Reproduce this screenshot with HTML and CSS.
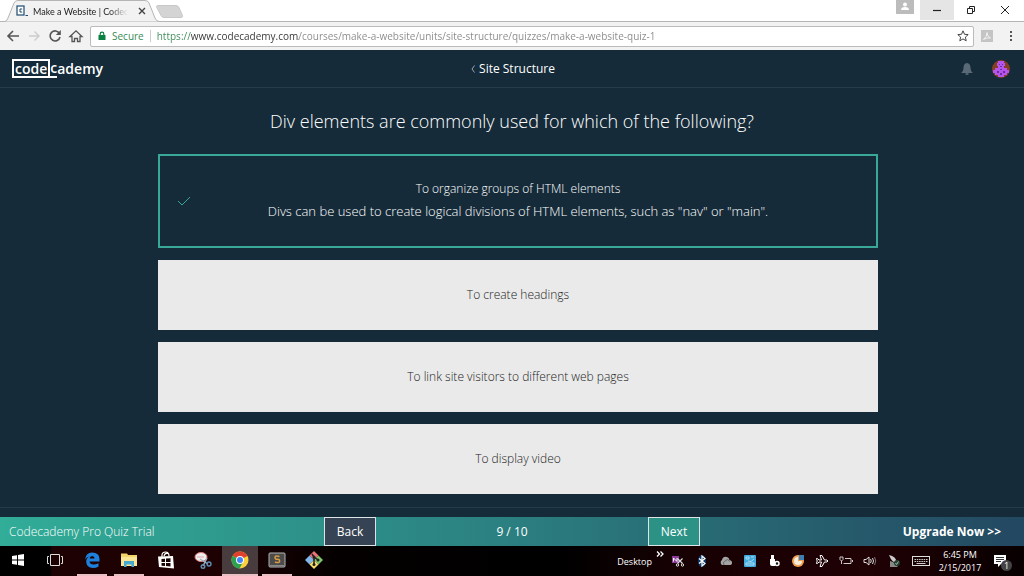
FILE: index.html
```html
<!DOCTYPE html>
<html lang="en">
<head>
    <meta charset="UTF-8">
    <title>Make a Website | Codecademy</title>
    <link rel="stylesheet" href="styles.css">
</head>
<body>
<div class="tabStrip">
    <div class="tab">
        <svg class="tabShape" viewBox="0 0 154 22" width="154" height="22"><path d="M0 21.5 Q2 21 3 18 L9 3 Q10 .5 13 .5 L140 .5 Q143 .5 144 3 L150 18 Q151 21 154 21.5" fill="#f2f2f2" stroke="#b5b5b5"/></svg>
        <svg class="favicon" viewBox="0 0 12 12" width="12" height="12"><rect x="1" y="1" width="7" height="9" fill="#fff" stroke="#1d4a70" stroke-width="1.2"/><path d="M6.200 4H4v3h2.200M9.500 10.500H12" fill="none" stroke="#1d4a70"/></svg>
        <span class="tabTitle">Make a Website | Codec</span>
        <button class="tabClose" aria-label="Close tab"><svg viewBox="0 0 8 8" width="8" height="8"><path d="M1 1l6 6M7 1L1 7" stroke="#444" stroke-width="1.4"/></svg></button>
    </div>
    <button class="newTab" aria-label="New tab"><svg viewBox="0 0 27 13" width="27" height="13"><path d="M2 .5H20q2 0 3 2l3.500 8q.5 2-1.500 2H8q-2 0-3-2L.8 2.500Q0 .5 2 .5z" fill="#d4d4d4" stroke="#c8c8c8"/></svg></button>
    <div class="windowButtons">
        <button class="profile" aria-label="Profile"><svg viewBox="0 0 18 14" width="18" height="14"><circle cx="9" cy="4.500" r="2" fill="#fff"/><path d="M5 10q0-3 4-3t4 3z" fill="#fff"/></svg></button>
        <button class="windowButton minimize" aria-label="Minimize"><svg viewBox="0 0 10 10" width="10" height="10"><path d="M1 5.500h8" stroke="#222" stroke-width="1.200"/></svg></button>
        <button class="windowButton" aria-label="Restore"><svg viewBox="0 0 10 10" width="10" height="10"><path d="M1.500 3.500h5v5h-5zM3.500 3.500v-2h5v5h-2" fill="none" stroke="#222"/></svg></button>
        <button class="windowButton" aria-label="Close"><svg viewBox="0 0 10 10" width="10" height="10"><path d="M1 1l8 8M9 1L1 9" stroke="#222"/></svg></button>
    </div>
</div>
<div class="toolbar">
    <button class="tool" aria-label="Back"><svg viewBox="0 0 16 16" width="16" height="16"><path d="M14 8H3.500M8 3L3 8l5 5" fill="none" stroke="#555" stroke-width="1.600"/></svg></button>
    <button class="tool" aria-label="Forward"><svg viewBox="0 0 16 16" width="16" height="16"><path d="M3 8h10M8.500 3.500L13 8l-4.500 4.500" fill="none" stroke="#ccc" stroke-width="1.400"/></svg></button>
    <button class="tool" aria-label="Reload"><svg viewBox="0 0 16 16" width="16" height="16"><path d="M12.500 5.500A5 5 0 1 0 13 9" fill="none" stroke="#555" stroke-width="1.600"/><path d="M13.800 2v5H8.800z" fill="#555"/></svg></button>
    <button class="tool" aria-label="Home"><svg viewBox="0 0 16 16" width="16" height="16"><path d="M2 8.500L8 2.800l6 5.700h-2V13.500H9.500v-3h-3v3H4v-5z" fill="none" stroke="#555" stroke-width="1.300"/></svg></button>
    <div class="addressBar">
        <svg viewBox="0 0 8 10" width="8" height="10"><path d="M2.200 5V3a1.800 1.800 0 0 1 3.600 0v2" fill="none" stroke="#0b8043" stroke-width="1.200"/><rect x=".5" y="4" width="7" height="5" fill="#0b8043"/></svg>
        <label class="secure" for="address">Secure</label>
        <input class="address" id="address" type="text" value="https://www.codecademy.com/courses/make-a-website/units/site-structure/quizzes/make-a-website-quiz-1">
        <button class="tool" aria-label="Bookmark"><svg viewBox="0 0 16 16" width="16" height="16"><path d="M8 2.800l1.500 3.500 3.700.3-2.800 2.500.8 3.700L8 10.900l-3.200 1.900.8-3.700L2.800 6.600l3.700-.3z" fill="none" stroke="#444"/></svg></button>
    </div>
    <button class="tool" aria-label="PDF extension"><svg viewBox="0 0 16 16" width="16" height="16"><rect x="2" y="2" width="12" height="12" fill="#c4c4c4"/><path d="M4.500 11.500Q8 8.500 8 4.500q0 4 3.500 5.500-3.500-.8-7 1.500z" fill="none" stroke="#f2f2f2"/></svg></button>
    <button class="tool" aria-label="Menu"><svg viewBox="0 0 16 16" width="16" height="16"><path d="M7 3h2v2H7zM7 7h2v2H7zM7 11h2v2H7z" fill="#555"/></svg></button>
</div>

<header class="header">
    <a class="logo" href="#"><span class="logoBox">code</span><span class="logoUnder">c</span>ademy</a>
    <a class="unit" href="#"><svg viewBox="0 0 4 8" width="4" height="8"><path d="M3.500.5L1 4l2.500 3.500" fill="none" stroke="#9aa5ad"/></svg>Site Structure</a>
    <div class="account">
        <svg viewBox="0 0 12 14" width="12" height="14"><path d="M6 1q3.500.5 3.500 5 0 3 2 4.500v.5H.5v-.5Q2.500 9 2.500 6q0-4.500 3.500-5z" fill="#596a76"/><path d="M4.500 11.500h3v1h-3z" fill="#8795a0"/></svg>
        <svg viewBox="0 0 18 18" width="18" height="18"><circle cx="9" cy="9" r="9" fill="#873f24"/><path d="M6 1h6v2h1v3h-1v2h3v2h2v3h-2v2h-3v2H6v-2H3v-2H1v-3h2V8h3V6H5V3h1z" fill="#b455ee"/><path d="M7 4h1v1H7zM10 4h1v1h-1zM8 6h2v1H8zM5 11h2v2H5zM11 11h2v2h-2zM8 9h2v1H8zM8 13h2v2H8z" fill="#6f2b9f"/></svg>
    </div>
</header>
<main class="quiz">
    <h1 class="question">Div elements are commonly used for which of the following?</h1>
    <div class="answers">
        <button class="answer correct">
            <svg class="check" viewBox="0 0 14 10" width="14" height="10"><path d="M1 5l4 4L13 1" fill="none" stroke="#35a793"/></svg>
            <span>To organize groups of HTML elements</span>
            <span class="explain">Divs can be used to create logical divisions of HTML elements, such as "nav" or "main".</span>
        </button>
        <button class="answer">To create headings</button>
        <button class="answer">To link site visitors to different web pages</button>
        <button class="answer">To display video</button>
    </div>
</main>
<footer class="trial">
    <span>Codecademy Pro Quiz Trial</span>
    <div class="pager">
        <button class="pagerButton back">Back</button>
        <span>9 / 10</span>
        <button class="pagerButton next">Next</button>
    </div>
    <a class="upgrade" href="#">Upgrade Now &gt;&gt;</a>
</footer>

<div class="taskbar">
    <button class="app" aria-label="Start"><svg viewBox="0 0 14 14" width="14" height="14"><path d="M1 3l5-.8v4.300H1zM7 2l6-1v5.500H7zM1 7.500h5v4.300L1 11zM7 7.500h6V13l-6-1z" fill="#fff"/></svg></button>
    <button class="app" aria-label="Task view"><svg viewBox="0 0 16 12" width="16" height="12"><path d="M3.500.5h9v11h-9zM2 2.500H.5v7H2M14 2.500h1.500v7H14" fill="none" stroke="#ddd"/></svg></button>
    <button class="app open" aria-label="Edge"><svg viewBox="0 0 16 16" width="16" height="16"><path d="M1 7.500Q2 .5 8 .5q7.500 0 7.500 6.500V9.500H5.500q.3 3 4.200 3 2.300 0 4.800-1.200v3.200Q12 16 9 16q-6.800 0-6.800-6.500 0-3.500 3.500-5.200Q2.500 5 1 7.500zM5.600 6.500h5Q10.500 4 8.200 4 6 4 5.600 6.500z" fill="#1c80dc" fill-rule="evenodd"/></svg></button>
    <button class="app open" aria-label="File Explorer"><svg viewBox="0 0 18 16" width="18" height="16"><path d="M1 1.500h6l1 1.500h9v11H1z" fill="#f4d36a"/><path d="M1 5h16v9H1z" fill="#fbe596"/><path d="M4 15V9h10v6h-2.500v-2.500h-5V15z" fill="#47a9cf"/></svg></button>
    <button class="app" aria-label="Store"><svg viewBox="0 0 18 18" width="18" height="18"><path d="M5 6V3.500Q5.500 1 8.500 1 12 1 12 5M7 5q1-3.500 4-2.500" fill="none" stroke="#fff" stroke-width="1.200"/><path d="M1 5.500L16 5l1 12.500L2 16z" fill="#fff"/><path d="M4.500 8l3.500-.3V11H4.500zM9 7.600l4.500-.4V11H9zM4.500 12H8v3l-3.500-.3zM9 12h4.500v3.500L9 15z" fill="#180204"/></svg></button>
    <button class="app" aria-label="Snipping Tool"><svg viewBox="0 0 18 18" width="18" height="18"><ellipse cx="7" cy="6" rx="6" ry="4.500" fill="#eee" stroke="#d8777b"/><path d="M3 6h7" stroke="#e3a3a6"/><path d="M6 8l8 5M13 7l-4 8" stroke="#9fb2c2" stroke-width="1.400"/><circle cx="15" cy="13" r="2" fill="none" stroke="#5f8cb0" stroke-width="1.400"/><circle cx="9" cy="15.500" r="1.800" fill="none" stroke="#5f8cb0" stroke-width="1.400"/></svg></button>
    <button class="app active" aria-label="Chrome"><svg viewBox="0 0 18 18" width="18" height="18"><circle cx="9" cy="9" r="8.500" fill="#fbd03b"/><path d="M9 9L1.600 4.800A8.500 8.500 0 0 1 16.400 5z" fill="#e0412f"/><path d="M9 9L1.600 4.800A8.500 8.500 0 0 0 8.500 17.500L12 11z" fill="#2fa04f"/><circle cx="9" cy="9" r="4" fill="#fff"/><circle cx="9" cy="9" r="3" fill="#4285f4"/></svg></button>
    <button class="app open" aria-label="Sublime Text"><svg viewBox="0 0 18 16" width="18" height="16"><rect x="1" y="1" width="16" height="14" rx="1" fill="#4b4b4b" stroke="#b5b5b5"/><path d="M11.500 4.500Q7 3 7 5.200t2.500 2 2 2.800q-1.500 1.200-4.500 0" fill="none" stroke="#d99a45" stroke-width="1.500"/><path d="M2 13.500h14" stroke="#888"/></svg></button>
    <button class="app" aria-label="Git"><svg viewBox="0 0 18 18" width="18" height="18"><path d="M9 0l4.500 4.500L9 9 4.500 4.500z" fill="#ee7278"/><path d="M4.500 4.500L9 9l-4.500 4.500L0 9z" fill="#82b5ea"/><path d="M13.500 4.500L18 9l-4.500 4.500L9 9z" fill="#83c76d"/><path d="M9 9l4.500 4.500L9 18l-4.500-4.500z" fill="#f7df6b"/><path d="M7 3l2 3v8M9 6l4 3" fill="none" stroke="#222" stroke-width="1.500"/><circle cx="9" cy="13.500" r="1.500" fill="#222"/><circle cx="13" cy="9" r="1.500" fill="#222"/><circle cx="9" cy="6" r="1.500" fill="#222"/></svg></button>
    <div class="tray">
        <span class="desktop">Desktop</span>
        <button class="trayIcon more" aria-label="More"><svg viewBox="0 0 8 6" width="8" height="6"><path d="M1 .5L3.500 3 1 5.500M4.500.5L7 3 4.500 5.500" fill="none" stroke="#fff" stroke-width="1.300"/></svg></button>
        <button class="trayIcon" aria-label="OneNote"><svg viewBox="0 0 16 16" width="16" height="16"><rect x="2" y="3" width="7" height="7" fill="#8d3b9c"/><path d="M3.500 8.500V5l3.500 3.500V5" fill="none" stroke="#fff"/><path d="M7.500 5.500l5 5M12.500 5.500l-5 5" stroke="#ddd" stroke-width="1.200"/><circle cx="7.500" cy="12" r="1.200" fill="none" stroke="#ddd"/><circle cx="12.500" cy="12" r="1.200" fill="none" stroke="#ddd"/></svg></button>
        <button class="trayIcon" aria-label="Bluetooth"><svg viewBox="0 0 16 16" width="16" height="16"><ellipse cx="8" cy="8" rx="4" ry="6" fill="#0c3a68"/><path d="M5 5.500l6 5-3 2.500V3l3 2.500-6 5" fill="none" stroke="#fff" stroke-width="1.200"/></svg></button>
        <button class="trayIcon" aria-label="OneDrive"><svg viewBox="0 0 16 16" width="16" height="16"><path d="M4 12a3 3 0 0 1 0-5q1-4 5-3 2 .5 2.500 3 3 .5 2.500 3.500-.5 1.500-2 1.500z" fill="#a3a3a3"/><path d="M6 12Q4 9 7.500 8q2-3 4 .5" fill="none" stroke="#666"/></svg></button>
        <button class="trayIcon" aria-label="Intel graphics"><svg viewBox="0 0 16 16" width="16" height="16"><rect x="2" y="2" width="12" height="12" rx="1" fill="#43aadd"/><path d="M4 10h8v2H4zM4 4h3v2H4zM9 4h3M6 8q3 2 6-2" fill="none" stroke="#a9dcf2"/></svg></button>
        <button class="trayIcon" aria-label="Safely remove hardware"><svg viewBox="0 0 16 16" width="16" height="16"><path d="M5 2h3v4H5zM4 6h5v7H6q-2 0-2-2z" fill="#fff"/><circle cx="11" cy="10.500" r="2" fill="#111" stroke="#fff" stroke-width="1.500"/></svg></button>
        <button class="trayIcon" aria-label="Updater"><svg viewBox="0 0 16 16" width="16" height="16"><circle cx="8" cy="8" r="6" fill="#f0a250"/><path d="M8 8V4a4 4 0 1 0 4 4z" fill="#f8eddc"/><path d="M9 2h5v5H9z" fill="#3d7fb5"/></svg></button>
        <button class="trayIcon" aria-label="Airplane mode"><svg viewBox="0 0 16 16" width="16" height="16"><path d="M2.500 5.500h1L5 7h2.500L6 2.500h2L10.500 7H13q2 1 0 2h-2.500L8 13.500H6L7.500 9H5l-1.500 1.500h-1l.7-2.500z" fill="none" stroke="#fff"/></svg></button>
        <button class="trayIcon" aria-label="Battery"><svg viewBox="0 0 16 16" width="16" height="16"><path d="M7 5.500h6v5H5.500M14.500 7v2" fill="none" stroke="#ccc"/><path d="M2 4h3v2.500L3.500 8 2 6.500zM3.500 8v3" fill="none" stroke="#ccc"/></svg></button>
        <button class="trayIcon" aria-label="Volume"><svg viewBox="0 0 16 16" width="16" height="16"><path d="M2 6.500h2L7 4v8L4 9.500H2zM8.500 6q1.500 2 0 4M10.500 5q2 3 0 6" fill="none" stroke="#ddd"/><path d="M12.500 4q2.500 4 0 8" fill="none" stroke="#777"/></svg></button>
        <button class="trayIcon" aria-label="Sync"><svg viewBox="0 0 16 16" width="16" height="16"><path d="M3 2q7 1 8 8-5 0-8-8z" fill="#ccc"/><path d="M4 8v6h8L7 9" fill="#888"/><circle cx="11" cy="10" r="3" fill="#273d32"/><path d="M9.500 10l1 1.500 2-3" fill="none" stroke="#91c4a7"/></svg></button>
        <button class="trayIcon keyboard" aria-label="Touch keyboard"><svg viewBox="0 0 18 12" width="18" height="12"><rect x=".5" y="1.500" width="17" height="9" fill="none" stroke="#ddd"/><path d="M2.500 4.500h13M2.500 6.500h13" stroke="#ccc" stroke-dasharray="1.500 .8"/><path d="M4.500 8.500h9" stroke="#ccc"/></svg></button>
        <div class="clock">
            <span>6:45 PM</span>
            <span>2/15/2017</span>
        </div>
        <button class="notifications" aria-label="Notifications"><svg viewBox="0 0 14 14" width="14" height="14"><path d="M1 1h12v9H8l-3 3v-3H1z" fill="#fff"/><path d="M3 3.500h8M3 5.500h8M3 7.500h5" stroke="#333"/></svg><span class="badge">1</span></button>
    </div>
</div>
</body>
</html>
```
FILE: styles.css
```css
*{
    box-sizing: border-box;
    padding: 0;
    margin: 0;
}
body{
    display: flex;
    flex-direction: column;
    min-height: 100vh;
    background-color: #152b39;
    font-family: "Open Sans", "Noto Sans", sans-serif;
}
a{
    color: inherit;
    text-decoration: none;
}
button{
    border: none;
    background: none;
    color: inherit;
    font: inherit;
}
svg{
    display: block;
    flex: none;
}

/* browser */
.tabStrip{
    display: flex;
    height: 22px;
    padding-left: 5px;
    background-color: #fff;
    border-bottom: 1px solid #b5b5b5;
}
.tab{
    position: relative;
    display: flex;
    align-items: center;
    gap: 5px;
    width: 151px;
    height: 22px;
    padding: 0 10px 0 11px;
}
.tabShape{
    position: absolute;
    top: 0;
    left: 0;
}
.favicon, .tabTitle, .tabClose{
    position: relative;
}
.tabTitle{
    white-space: nowrap;
    font: 9px Lato, sans-serif;
    color: #222;
    -webkit-mask-image: linear-gradient(to right, #000 80%, transparent);
    mask-image: linear-gradient(to right, #000 80%, transparent);
}
.tabClose{
    margin-left: auto;
}
.newTab{
    align-self: flex-start;
    padding-top: 5px;
}
.windowButtons{
    display: flex;
    align-items: flex-start;
    margin-left: auto;
    padding-right: 2px;
}
.profile{
    margin-right: 6px;
    background-color: #bcbcbc;
}
.windowButton{
    display: flex;
    align-items: center;
    justify-content: center;
    width: 34px;
    height: 20px;
}
.minimize{
    background-color: #e5e5e5;
}
.toolbar{
    display: flex;
    align-items: center;
    gap: 5px;
    height: 28px;
    padding: 0 5px;
    background-color: #f2f2f2;
}
.toolbar > .tool:last-child{
    margin-left: 3px;
}
.addressBar{
    display: flex;
    flex: 1;
    align-items: center;
    height: 21px;
    margin-left: 1px;
    padding: 0 2px 0 7px;
    border: 1px solid #bbb;
    border-radius: 2px;
    background-color: #fff;
    font-size: 10px;
}
.secure{
    margin-left: 6px;
    padding-right: 6px;
    border-right: 1px solid #ccc;
    line-height: 12px;
    color: #3a8a57;
}
.address{
    flex: 1;
    min-width: 0;
    margin-left: 6px;
    border: none;
    font: inherit;
    color: transparent;
    background: linear-gradient(to right, #3a8a57 34px, #333 34px, #333 142px, #888 142px);
    -webkit-background-clip: text;
    background-clip: text;
}

/* page */
.header{
    display: grid;
    grid-template-columns: 1fr auto 1fr;
    align-items: center;
    height: 38px;
    padding: 0 14px 0 12px;
    border-bottom: 1px solid #263c49;
    color: #fff;
}
.logo{
    display: flex;
    align-items: center;
    font-size: 14px;
    font-weight: 600;
    line-height: 16px;
}
.logoBox{
    padding: 0 1px;
    border: 2px solid #fff;
    line-height: 15px;
}
.logoUnder{
    border-bottom: 2px solid #fff;
}
.unit{
    display: flex;
    align-items: center;
    gap: 4px;
    padding-left: 4px;
    font-size: 12px;
}
.account{
    display: flex;
    align-items: center;
    justify-content: flex-end;
    gap: 19px;
}
.quiz{
    flex: 1;
    padding: 20px 0 13px;
    border-bottom: 1px solid #263c49;
}
.question{
    text-align: center;
    font-size: 18px;
    font-weight: 300;
    line-height: 26px;
    color: #fff;
}
.answers{
    display: flex;
    flex-direction: column;
    gap: 12px;
    max-width: 732px;
    margin: 20px auto 0;
    padding-left: 12px;
}
.answer{
    min-height: 70px;
    padding-bottom: 2px;
    background-color: #eaeaea;
    font-size: 12px;
    font-weight: 300;
    color: #222;
}
.correct{
    position: relative;
    display: flex;
    flex-direction: column;
    align-items: center;
    justify-content: center;
    min-height: 94px;
    border: 2px solid #3aa898;
    background: none;
    line-height: 22px;
    color: #fff;
}
.explain{
    font-size: 13px;
}
.check{
    position: absolute;
    top: 40px;
    left: 17px;
}
.trial{
    display: grid;
    grid-template-columns: 1fr 376px 1fr;
    align-items: center;
    height: 29px;
    margin-top: 9px;
    background: linear-gradient(to right, #31ad98, #2b7f80 50%, #234861);
    font-size: 12px;
    color: #fff;
}
.trial > span{
    padding-left: 9px;
    font-weight: 300;
}
.pager{
    display: flex;
    align-items: center;
    justify-content: space-between;
}
.pagerButton{
    width: 52px;
    height: 29px;
    border: 1px solid #dce4e6;
}
.back{
    background-color: #364354;
}
.next{
    background-color: #2c9286;
}
.upgrade{
    justify-self: end;
    padding-right: 23px;
    font-weight: 700;
}

/* taskbar */
.taskbar{
    display: flex;
    gap: 1px;
    height: 30px;
    background: linear-gradient(to right, #000 50px, #1e0103 52px, #1e0103 220px, #040000 340px, #000 560px, #170103 680px, #200104 870px, #080001);
    color: #fff;
}
.app{
    display: flex;
    align-items: center;
    justify-content: center;
    width: 36px;
    border-bottom: 2px solid transparent;
}
.open{
    width: 30px;
    margin: 0 3px;
    border-color: #eac0c5;
}
.active{
    background-color: #483c3f;
    border-color: #eac0c5;
}
.tray{
    display: flex;
    align-items: center;
    gap: 8px;
    margin-left: auto;
    font-size: 9px;
}
.trayIcon{
    width: 16px;
}
.more{
    align-self: flex-start;
    width: 8px;
    margin: 0 -2px 0 -4px;
    padding-top: 5px;
}
.keyboard{
    width: 18px;
    margin-left: 2px;
}
.clock{
    display: flex;
    flex-direction: column;
    align-items: center;
    width: 44px;
    line-height: 13px;
}
.notifications{
    position: relative;
    width: 34px;
    height: 30px;
    padding-left: 3px;
}
.badge{
    position: absolute;
    top: 14px;
    left: 11px;
    width: 11px;
    height: 11px;
    border-radius: 50%;
    background-color: #444;
    font-size: 9px;
    line-height: 11px;
}
```
